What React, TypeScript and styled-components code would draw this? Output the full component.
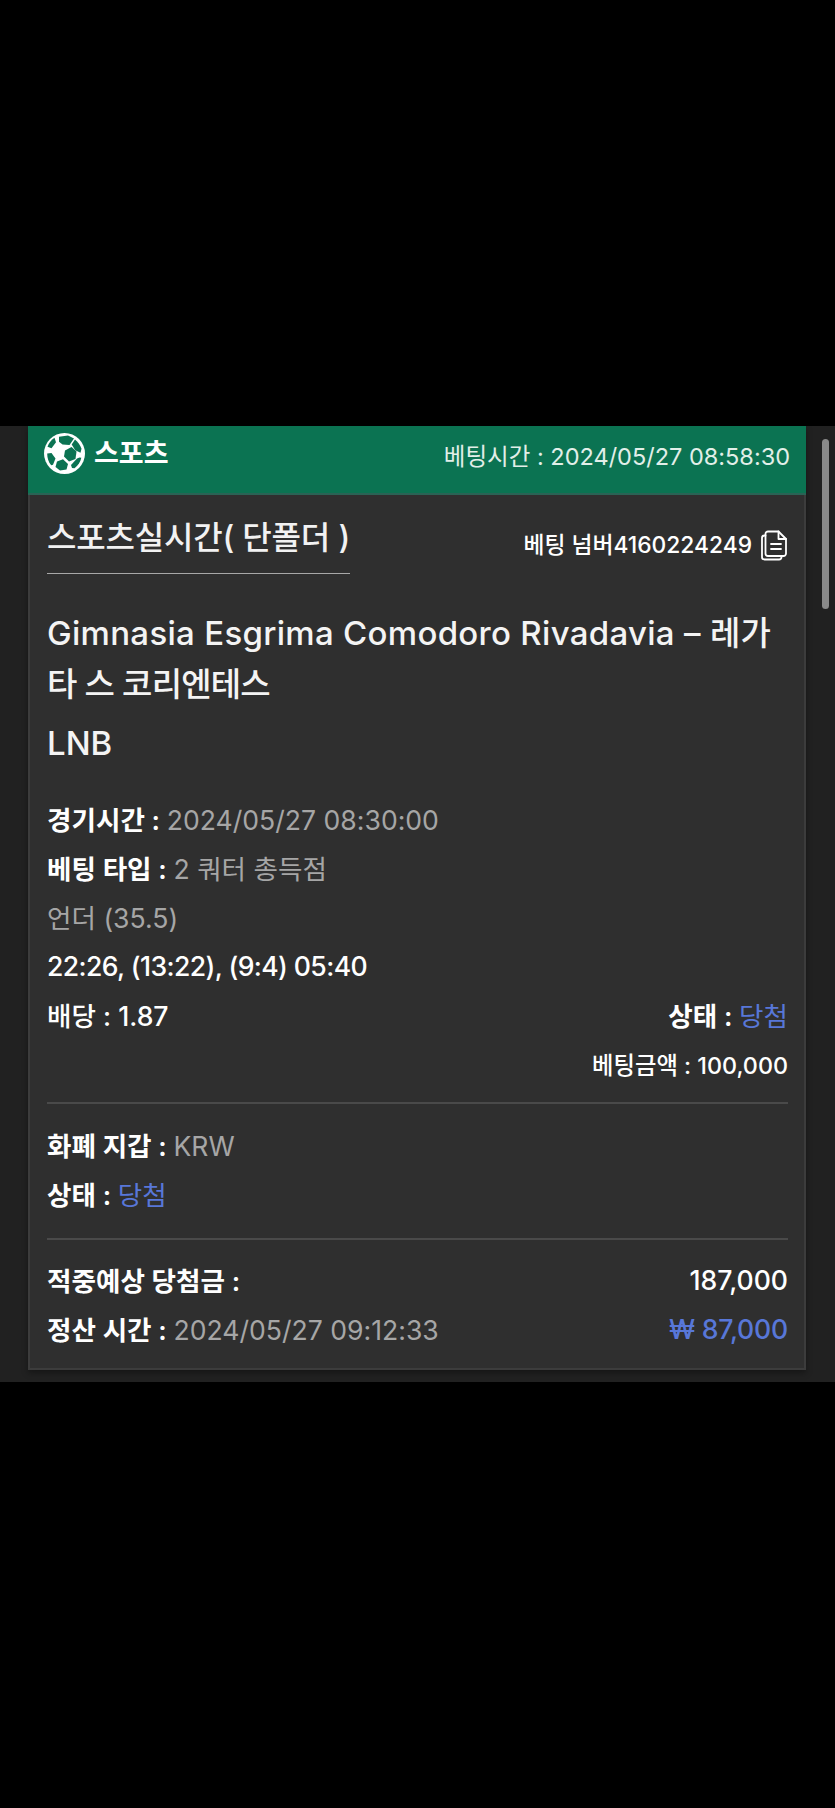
import React from "react";
import styled, { createGlobalStyle } from "styled-components";

const Global = createGlobalStyle`
  html, body { margin: 0; padding: 0; background: #000; }
  body { width: 835px; height: 1808px; overflow: hidden; font-family: Inter, "Noto Sans CJK KR", sans-serif; }
`;
const Page = styled.div`
  height: 1808px;
  padding-top: 426px;
  box-sizing: border-box;
`;
const Strip = styled.div`
  position: relative;
  height: 956px;
  background: #212121;
  padding: 0 29px 0 28px;
`;
const Scrollbar = styled.div`
  position: absolute;
  left: 822px;
  top: 13px;
  width: 7px;
  height: 170px;
  border-radius: 4px;
  background: #8a8a8a;
`;
const Card = styled.div`
  background: #2f2f2f;
  box-shadow: 0 3px 6px rgba(0, 0, 0, 0.35);
`;
const CardHeader = styled.div`
  height: 69px;
  box-sizing: border-box;
  background: #0b7352;
  border-bottom: 2px solid #2a6355;
  display: flex;
  align-items: flex-start;
  justify-content: space-between;
  padding: 7px 16px 0 16px;
`;
const Sport = styled.div`
  display: flex;
  align-items: center;
  gap: 9px;
  color: #fff;
  font-size: 27px;
  font-weight: 700;
  line-height: 41px;
`;
const BetTime = styled.div`
  color: #e2efe9;
  font-size: 23.5px;
  line-height: 32px;
  margin-top: 8px;
`;
const Body = styled.div`
  border: 2px solid #3c3c3c;
  border-top: 0;
  padding: 23px 16px 15px 17px;
  height: 875px;
  box-sizing: border-box;
`;
const TitleRow = styled.div`
  display: flex;
  justify-content: space-between;
  align-items: flex-start;
`;
const Title = styled.div`
  color: #f2f2f2;
  font-size: 32px;
  font-weight: 500;
  line-height: 40px;
  letter-spacing: -0.2px;
  padding-bottom: 15px;
  border-bottom: 1px solid #a8a8a8;
  white-space: pre;
`;
const BetNumber = styled.div`
  display: flex;
  align-items: center;
  gap: 8px;
  color: #fff;
  font-size: 22.8px;
  font-weight: 500;
  line-height: 32px;
  margin-top: 11px;
`;
const Match = styled.div`
  color: #f4f4f4;
  font-size: 33px;
  font-weight: 500;
  line-height: 51px;
  margin-top: 34px;
  letter-spacing: 0.3px;
  white-space: nowrap;
`;
const HangulLine = styled.span`
  letter-spacing: -0.8px;
`;
const League = styled.div`
  color: #f4f4f4;
  font-size: 33px;
  font-weight: 500;
  line-height: 51px;
  margin-top: 8px;
`;
const Details = styled.div`
  margin-top: 25px;
`;
const Row = styled.div<{ $end?: boolean }>`
  display: flex;
  justify-content: ${(p) => (p.$end ? "flex-end" : "space-between")};
  align-items: center;
  height: 49px;
  font-size: 26.6px;
`;
const Label = styled.span`
  color: #fff;
  font-weight: 600;
  white-space: pre;
`;
const Value = styled.span`
  color: #a6a6a6;
  font-weight: 400;
`;
const Strong = styled.span<{ $small?: boolean; $tight?: boolean }>`
  color: #fff;
  font-weight: 500;
  letter-spacing: ${(p) => (p.$tight ? "-0.6px" : "0")};
  font-size: ${(p) => (p.$small ? "23.3px" : "26.6px")};
`;
const Win = styled.span<{ $bold?: boolean }>`
  color: #5877d8;
  font-weight: ${(p) => (p.$bold ? 500 : 400)};
  letter-spacing: ${(p) => (p.$bold ? "-0.2px" : "0")};
`;
const Divider = styled.hr<{ $top: number; $bottom: number }>`
  border: 0;
  height: 2px;
  background: #4a4a4a;
  margin: ${(p) => p.$top}px 0 ${(p) => p.$bottom}px;
`;

const Ball = () => (
  <svg width="41" height="41" viewBox="0 0 41 41">
    <circle cx="20.500" cy="20.500" r="20.500" fill="#fff" />
    <g fill="#0b7352">
      <path d="M15 3.800l9-1.300 6 3-4.500 6.500-7-.5-3.500-2.700z" />
      <path d="M10.500 4.800l1.500 4.500-4.500 6-4-1.500c1.300-3.700 3.700-6.900 7-9z" />
      <path d="M31 6.500c3 2.400 5.300 5.700 6.500 9.300l-1 4-5.300-2.500-3.500-5.800z" />
      <path d="M21 17.500l6.500-3.500 5 4.500-1 7.500-6.500 2.500-5-5z" />
      <path d="M3.200 20.500l4.300-.5 4 5.500-2.500 6.300-1.800.5c-2.800-3.300-4-7.500-4-11.800z" />
      <path d="M13 28.500l6-2.200 5 4.800-1.500 5.500-6.500.8-4.500-3.400z" />
      <path d="M33 25.500l2.500-1 1.800.3c-.8 4.200-3.200 7.900-6.800 10.400l-2.500-.2-1-3z" />
    </g>
  </svg>
);

const CopyIcon = () => (
  <svg width="28" height="32" viewBox="0 0 28 32" fill="none" stroke="#fff" strokeWidth="1.800" strokeLinejoin="round" strokeLinecap="round">
    <path d="M8 2.500h10.500l7.500 7.500v14.500a2.500 2.500 0 0 1-2.500 2.500H8a2.500 2.500 0 0 1-2.500-2.500V5A2.500 2.500 0 0 1 8 2.500z" />
    <path d="M18.500 2.500V10H26" />
    <path d="M5.500 6.500H4.500A2.500 2.500 0 0 0 2 9v19a2.500 2.500 0 0 0 2.500 2.500H19a2.500 2.500 0 0 0 2.500-2.500v-1" />
    <path d="M11 15h10M11 20h10" />
  </svg>
);

export default function App() {
  return (
    <Page>
      <Global />
      <Strip>
        <Scrollbar />
        <Card>
          <CardHeader>
            <Sport>
              <Ball />
              <span>스포츠</span>
            </Sport>
            <BetTime>베팅시간 : 2024/05/27 08:58:30</BetTime>
          </CardHeader>
          <Body>
            <TitleRow>
              <Title>스포츠실시간( 단폴더 )</Title>
              <BetNumber>
                베팅 넘버4160224249
                <CopyIcon />
              </BetNumber>
            </TitleRow>
            <Match>
              Gimnasia Esgrima Comodoro Rivadavia – 레가
              <br /><HangulLine>타 스 코리엔테스</HangulLine>
            </Match>
            <League>LNB</League>
            <Details>
              <Row><span><Label>경기시간 : </Label><Value>2024/05/27 08:30:00</Value></span></Row>
              <Row><span><Label>베팅 타입 : </Label><Value>2 쿼터 총득점</Value></span></Row>
              <Row><Value>언더 (35.5)</Value></Row>
              <Row><Strong $tight>22:26, (13:22), (9:4) 05:40</Strong></Row>
              <Row>
                <Strong>배당 : 1.87</Strong>
                <span><Label>상태 : </Label><Win>당첨</Win></span>
              </Row>
              <Row $end><Strong $small>베팅금액 : 100,000</Strong></Row>
            </Details>
            <Divider $top={14} $bottom={16} />
            <Row><span><Label>화폐 지갑 : </Label><Value>KRW</Value></span></Row>
            <Row><span><Label>상태 : </Label><Win>당첨</Win></span></Row>
            <Divider $top={20} $bottom={15} />
            <Row>
              <Label>적중예상 당첨금 :</Label>
              <Strong>187,000</Strong>
            </Row>
            <Row>
              <span><Label>정산 시간 : </Label><Value>2024/05/27 09:12:33</Value></span>
              <Win $bold>₩ 87,000</Win>
            </Row>
          </Body>
        </Card>
      </Strip>
    </Page>
  );
}
